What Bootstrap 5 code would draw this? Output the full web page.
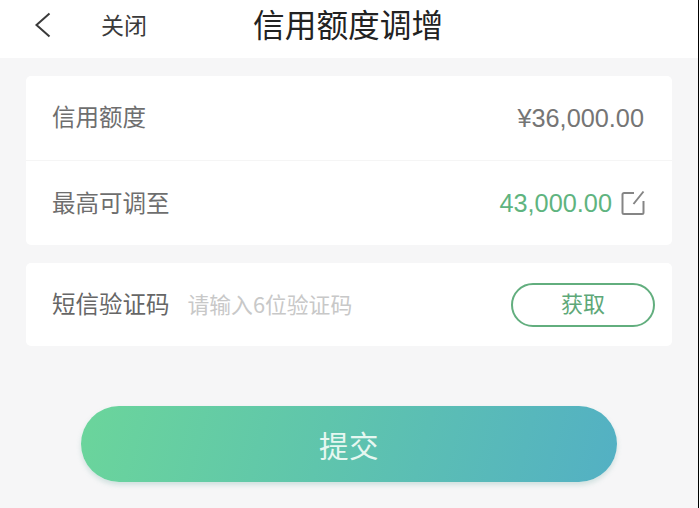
<!DOCTYPE html>
<html lang="zh">
<head>
<meta charset="utf-8">
<title>信用额度调增</title>
<link href="https://cdn.jsdelivr.net/npm/bootstrap@5.3.0/dist/css/bootstrap.min.css" rel="stylesheet">
<style>
html{height:100%;margin:0;background:#fff}
body{margin:0;background:#f6f6f7;font-family:"Noto Sans CJK SC","Liberation Sans",sans-serif;overflow:hidden;box-sizing:border-box;width:699px;height:508px;border-right:1px solid #000}
.top-bar{height:58px;background:#fff;padding:0 0 11px 34px}
.back-ico{width:18px;height:28px;display:block;margin-top:2px}
.close-txt{font-size:23px;color:#3a3a3a;margin-left:49px;width:107px;line-height:1;margin-top:1px}
.page-title{font-size:31.700px;color:#222;line-height:1;margin-left:45px}
.sheet{margin:18px 26px 0 26px;background:#fff;border-radius:5px}
.sheet-b{margin-top:18px}
.line-a{height:84px;padding:0 28px 0 26px;font-size:23.500px;color:#6e6e6e}
.line-a+.line-a{border-top:1px solid #f5f5f5;height:85px;padding-right:26px}
.line-c{height:83px;padding:0 17px 0 26px;font-size:23.500px;color:#666}
.lbl-txt{line-height:1;margin-top:-3px}
.lbl-low{margin-top:-1px}
.val-num{font-family:"Liberation Sans",sans-serif;font-size:25.300px;color:#757575;line-height:1;margin-top:2px}
.val-green{color:#5fb47f}
.edit-ico{width:25px;height:26px;margin-left:9px;display:block}
.hint-txt{font-size:21.800px;color:#c8c8c8;margin-left:18px;line-height:1;margin-top:-1px}
.get-btn{width:144px;height:44px;border:2px solid #62ae7e;border-radius:22px;color:#5da878;font-size:22px;background:#fff;padding:0 0 5px;line-height:1}
.get-btn:hover{border-color:#62ae7e;color:#5da878;background:#fff}
.submit-wrap{padding:60px 81px 0 81px}
.submit-btn{width:100%;height:76px;border:0;border-radius:38px;color:#e6f7f1;font-size:29.500px;letter-spacing:.5px;background:linear-gradient(105deg,#6bd59b 0%,#5fc5ac 45%,#53b0c4 100%);box-shadow:0 3px 5px rgba(110,170,160,.28);padding:0}
.submit-btn:hover{color:#e6f7f1}
</style>
</head>
<body>
<header class="top-bar d-flex align-items-center">
  <svg class="back-ico" viewBox="0 0 18 28" fill="none" stroke="#3a3a3a" stroke-width="2"><path d="M15.500 2.500 2.500 14l13 11.500"/></svg>
  <span class="close-txt">关闭</span>
  <span class="page-title">信用额度调增</span>
</header>
<main>
  <section class="sheet">
    <div class="line-a d-flex align-items-center justify-content-between">
      <span class="lbl-txt">信用额度</span><span class="val-num">¥36,000.00</span>
    </div>
    <div class="line-a d-flex align-items-center justify-content-between">
      <span class="lbl-txt lbl-low">最高可调至</span>
      <span class="d-flex align-items-center"><span class="val-num val-green">43,000.00</span>
      <svg class="edit-ico" viewBox="0 0 25 26" fill="none" stroke="#858585" stroke-width="2"><path d="M13 3H3a1.500 1.500 0 0 0-1.500 1.500v18A1.500 1.500 0 0 0 3 24h18a1.500 1.500 0 0 0 1.500-1.500V11M22.500 1.500 12.500 14"/></svg></span>
    </div>
  </section>
  <section class="sheet sheet-b">
    <div class="line-c d-flex align-items-center">
      <span class="lbl-txt lbl-low">短信验证码</span><span class="hint-txt flex-grow-1">请输入6位验证码</span>
      <button type="button" class="btn get-btn">获取</button>
    </div>
  </section>
  <div class="submit-wrap"><button type="button" class="btn submit-btn">提交</button></div>
</main>
<script src="https://cdn.jsdelivr.net/npm/bootstrap@5.3.0/dist/js/bootstrap.bundle.min.js"></script>
</body>
</html>
